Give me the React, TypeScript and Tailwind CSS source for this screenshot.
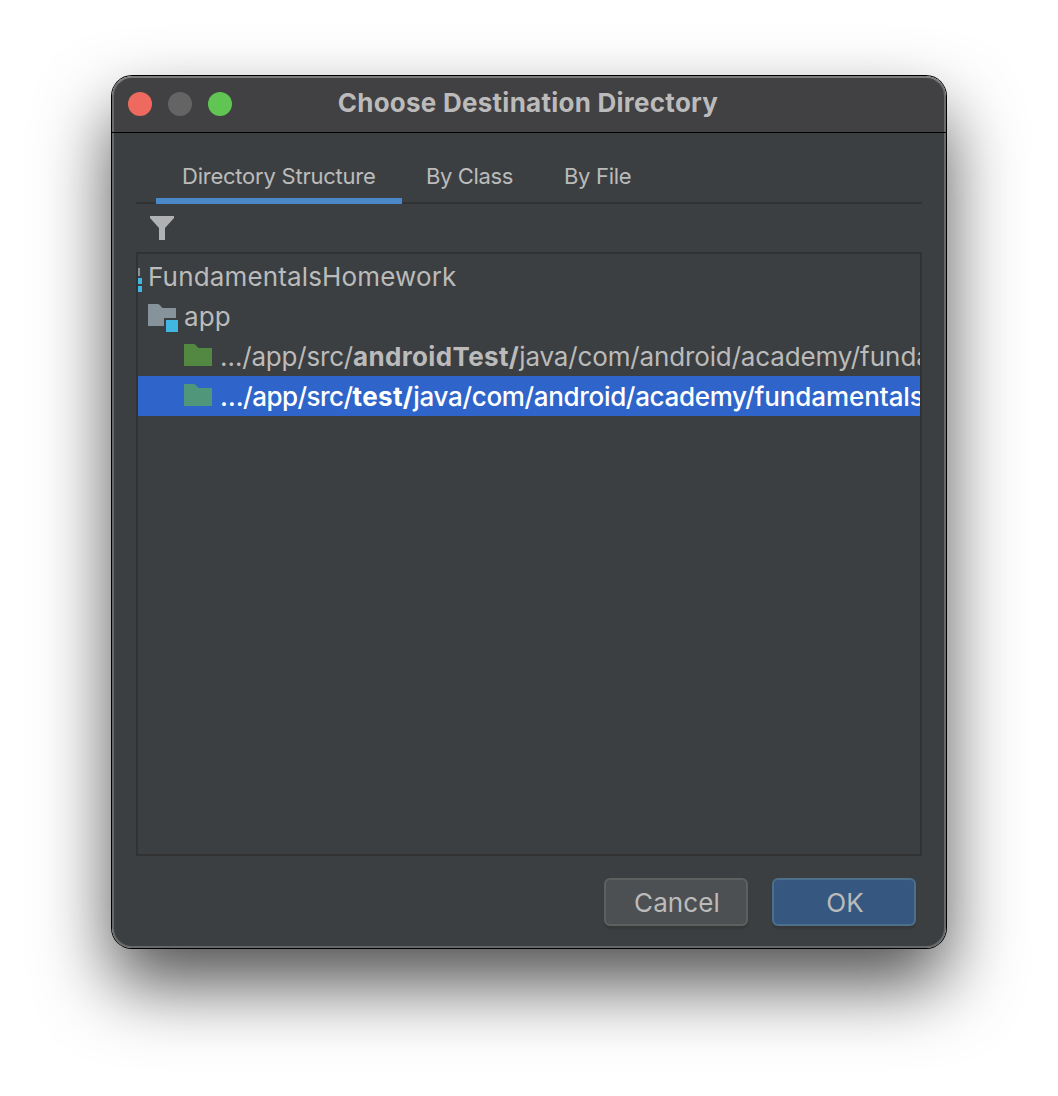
function Folder({ color, module = false }: { color: string; module?: boolean }) {
  return (
    <svg className="mt-2 shrink-0" width="30" height="28" viewBox="0 0 30 28">
      <path
        fill={color}
        d={module ? 'M0 0h9.500q1.300 0 2.200 1L14.500 4H28v10H16v8H0z' : 'M0 0h9.500q1.300 0 2.200 1L14.500 4H28v18H0z'}
      />
      {module && <path fill="#40b6e0" d="M18 16h12v12H18z" />}
    </svg>
  );
}

function Path({ source, selected = false }: { source: string; selected?: boolean }) {
  return (
    <span className={'ml-[6px] leading-[42px] ' + (selected ? 'font-medium' : '')}>
      <span className={selected ? 'tracking-[-0.54px]' : 'tracking-[-0.2px]'}>…/app/src/</span>
      <b className="tracking-[0.36px]">{source}</b>
      <span className={selected ? 'tracking-[-0.33px]' : 'tracking-[-0.14px]'}>java/com/android/academy/</span>
      <span className={selected ? 'tracking-[-0.08px]' : ''}>fundamentals</span>
    </span>
  );
}

const tabs = [
  { label: 'Directory Structure', style: 'w-[246px] pl-[26px] tracking-[-0.23px] border-b-[6px] border-[#4a88c7]' },
  { label: 'By Class', style: 'w-[138px] pl-[24px] tracking-[-0.36px]' },
  { label: 'By File', style: 'w-[120px] pl-[24px] tracking-[-0.3px]' },
];

export default function App() {
  return (
    <main className="flex h-[1096px] w-[1058px] justify-center overflow-hidden bg-white pt-[76px] font-['Inter','Liberation_Sans',sans-serif]">
      <section className="flex h-[872px] w-[834px] flex-col rounded-[20px] text-[#bbbbbb] shadow-[0_0_0_1px_#000,0_36px_72px_rgba(0,0,0,0.69)]">
        <header className="grid h-14 shrink-0 grid-cols-[200px_1fr_200px] rounded-t-[20px] border-x-2 border-t-2 border-x-[#6a6a6b] border-t-[#7c7c7d] bg-[#414042]">
          <div className="flex gap-4 pt-[14px] pl-[14px]">
            <i className="size-6 rounded-full bg-[#ee6a5f]" />
            <i className="size-6 rounded-full bg-[#646465]" />
            <i className="size-6 rounded-full bg-[#61c554]" />
          </div>
          <h1 className="-ml-[2px] text-center text-[26px] leading-[49px] font-bold tracking-[0.25px] whitespace-nowrap">
            Choose Destination Directory
          </h1>
        </header>
        <div className="h-px shrink-0 bg-black" />
        <div className="flex grow flex-col rounded-b-[20px] border-x-2 border-b-2 border-[#66696a] bg-[#3c3f41] px-[22px] pt-[17px]">
          <nav className="flex h-[54px] shrink-0 border-b-2 border-[#323232] pl-5 text-[22px] leading-[52px] whitespace-nowrap">
            {tabs.map(({ label, style }) => (
              <div key={label} className={'h-[54px] ' + style}>{label}</div>
            ))}
          </nav>
          <div className="h-12 shrink-0 pt-3 pl-[14px]">
            <svg width="24" height="24" viewBox="0 0 24 24" fill="#afb1b3">
              <path d="M0 0h24v2l-9 10v12H9V12L0 2z" />
            </svg>
          </div>
          <div className="h-[604px] w-[786px] shrink-0 overflow-hidden border-2 border-[#323232] pt-[2px] text-[26px] whitespace-nowrap">
            <div className="flex h-10">
              <svg className="mt-3 shrink-0" width="4" height="24" viewBox="0 0 4 24">
                <path fill="#87939a" d="M0 0h2v8H0z" />
                <path fill="#40b6e0" d="M0 10h4v6H0zM0 18h4v6H0z" />
              </svg>
              <span className="ml-[6px] leading-[42px] tracking-[0.15px]">FundamentalsHomework</span>
            </div>
            <div className="flex h-10 pl-[10px]">
              <Folder color="#87939a" module />
              <span className="ml-[6px] leading-[42px] tracking-[0.15px]">app</span>
            </div>
            <div className="flex h-10 pl-[46px]">
              <Folder color="#538843" />
              <Path source="androidTest/" />
            </div>
            <div className="flex h-10 bg-[#2f65ca] pl-[46px] text-white">
              <Folder color="#4f967a" />
              <Path source="test/" selected />
            </div>
          </div>
          <div className="flex justify-end gap-6 pt-[22px] pr-[6px] text-[26px] leading-[46px]">
            <button className="h-12 w-36 rounded-md border-2 border-[#5e6060] bg-[#4c5052] pl-[2px] tracking-[0.1px] shadow-[0_3px_2px_rgba(50,50,50,0.5)]">Cancel</button>
            <button className="h-12 w-36 rounded-md border-2 border-[#4c708c] bg-[#365880] pl-[2px] shadow-[0_3px_2px_rgba(50,50,50,0.5)]">OK</button>
          </div>
        </div>
      </section>
    </main>
  );
}
